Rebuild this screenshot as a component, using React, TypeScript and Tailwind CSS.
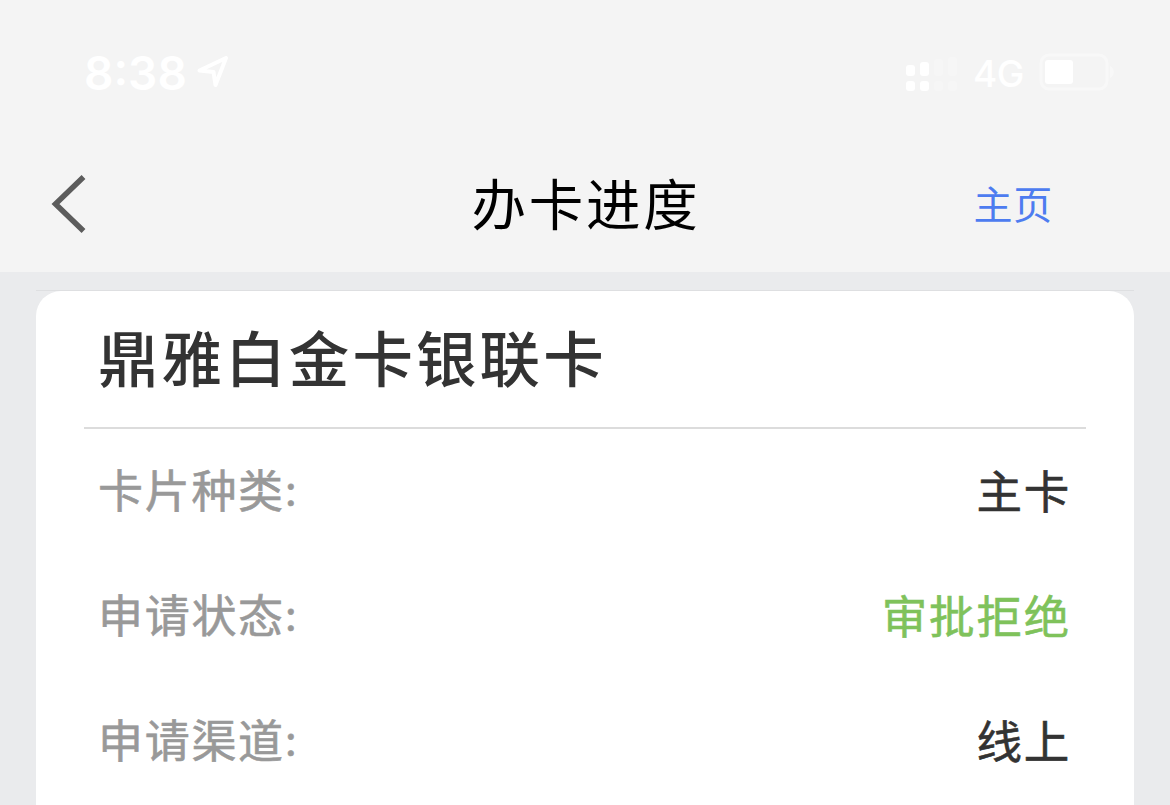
const rows = [
  { label: "卡片种类", value: "主卡", tone: "text-[#333333]" },
  { label: "申请状态", value: "审批拒绝", tone: "text-[#7fc25b]" },
  { label: "申请渠道", value: "线上", tone: "text-[#333333]" },
];

function StatusBar() {
  return (
    <div className="flex h-[144px] items-center justify-between pt-px pr-[55px] pl-[84px] text-white">
      <div className="flex items-center gap-[10px]">
        <span className="font-['Inter',sans-serif] text-[46px] leading-[48px] font-semibold">8:38</span>
        <svg width="32" height="34" viewBox="0 0 32 34" fill="none" stroke="white" strokeWidth="4" strokeLinejoin="round">
          <path d="M2.5 14.5 29 2 18.5 29 16.5 16Z" />
        </svg>
      </div>
      <div className="flex items-center">
        <svg className="mt-[3px]" width="54" height="34" viewBox="0 0 54 34" fill="white">
          <rect x="1" y="8" width="9" height="11" rx="3" />
          <rect x="1" y="24" width="9" height="10" rx="3" />
          <rect x="15" y="5" width="9" height="14" rx="3" />
          <rect x="15" y="24" width="9" height="10" rx="3" />
          <g opacity="0.25">
            <rect x="29" y="2" width="9" height="17" rx="3" />
            <rect x="29" y="24" width="9" height="10" rx="3" />
            <rect x="43" y="0" width="9" height="19" rx="3" />
            <rect x="43" y="24" width="9" height="10" rx="3" />
          </g>
        </svg>
        <span className="mt-[2px] ml-[14px] w-[52px] font-['Inter',sans-serif] text-[37px] leading-[40px] font-medium tracking-[-0.5px]">4G</span>
        <svg className="-mt-px ml-[14px]" width="76" height="38" viewBox="0 0 76 38">
          <rect x="2" y="2" width="66" height="34" rx="8" fill="none" stroke="white" strokeWidth="3" opacity="0.4" />
          <rect x="6" y="7" width="28" height="24" rx="3" fill="white" />
          <path d="M71 13c5 2 5 10 0 12Z" fill="white" opacity="0.4" />
        </svg>
      </div>
    </div>
  );
}

export default function App() {
  return (
    <div className="h-[805px] w-full overflow-hidden bg-[#eaebed] font-['Noto_Sans_CJK_SC',sans-serif]">
      <header className="h-[272px] bg-[#f4f4f4]">
        <StatusBar />
        <div className="grid h-[120px] grid-cols-[1fr_auto_1fr] items-center pr-[117px] pl-[50px]">
          <svg width="38" height="60" viewBox="0 0 38 60" fill="none" stroke="#5c5c5c" strokeWidth="5.5">
            <path d="M33.5 3 5.5 30 33.5 57" />
          </svg>
          <h1 className="ml-[69px] pb-[5px] text-[54.5px] leading-[80px] tracking-[2.8px] whitespace-nowrap text-black">办卡进度</h1>
          <a className="justify-self-end pb-[4px] text-[39px] leading-[60px] tracking-[0.8px] text-[#4d7cf0]">主页</a>
        </div>
      </header>
      <main className="px-[36px] pt-[18px]">
        <div className="h-px bg-[#dedfe1]" />
        <section className="h-[540px] rounded-t-[25px] bg-white px-[48px]">
          <h2 className="h-[138px] border-b-2 border-[#dcdcdc] pt-[19px] pl-[14px] text-[60.5px] leading-[92px] font-medium tracking-[3.1px] text-[#333333]">鼎雅白金卡银联卡</h2>
          <dl className="pr-[15px] pl-[14px]">
            {rows.map((row) => (
              <div key={row.label} className="flex h-[125px] items-start justify-between pt-[25px] text-[45.5px] leading-[70px] tracking-[1.8px] [-webkit-text-stroke-width:0.6px]">
                <dt className="flex text-[#999999]">
                  <span className="text-[45px] tracking-[1.7px]">{row.label}</span>
                  <span className="pt-[2px] font-['Inter',sans-serif] text-[42px]">:</span>
                </dt>
                <dd className={row.tone}>{row.value}</dd>
              </div>
            ))}
          </dl>
        </section>
      </main>
    </div>
  );
}
